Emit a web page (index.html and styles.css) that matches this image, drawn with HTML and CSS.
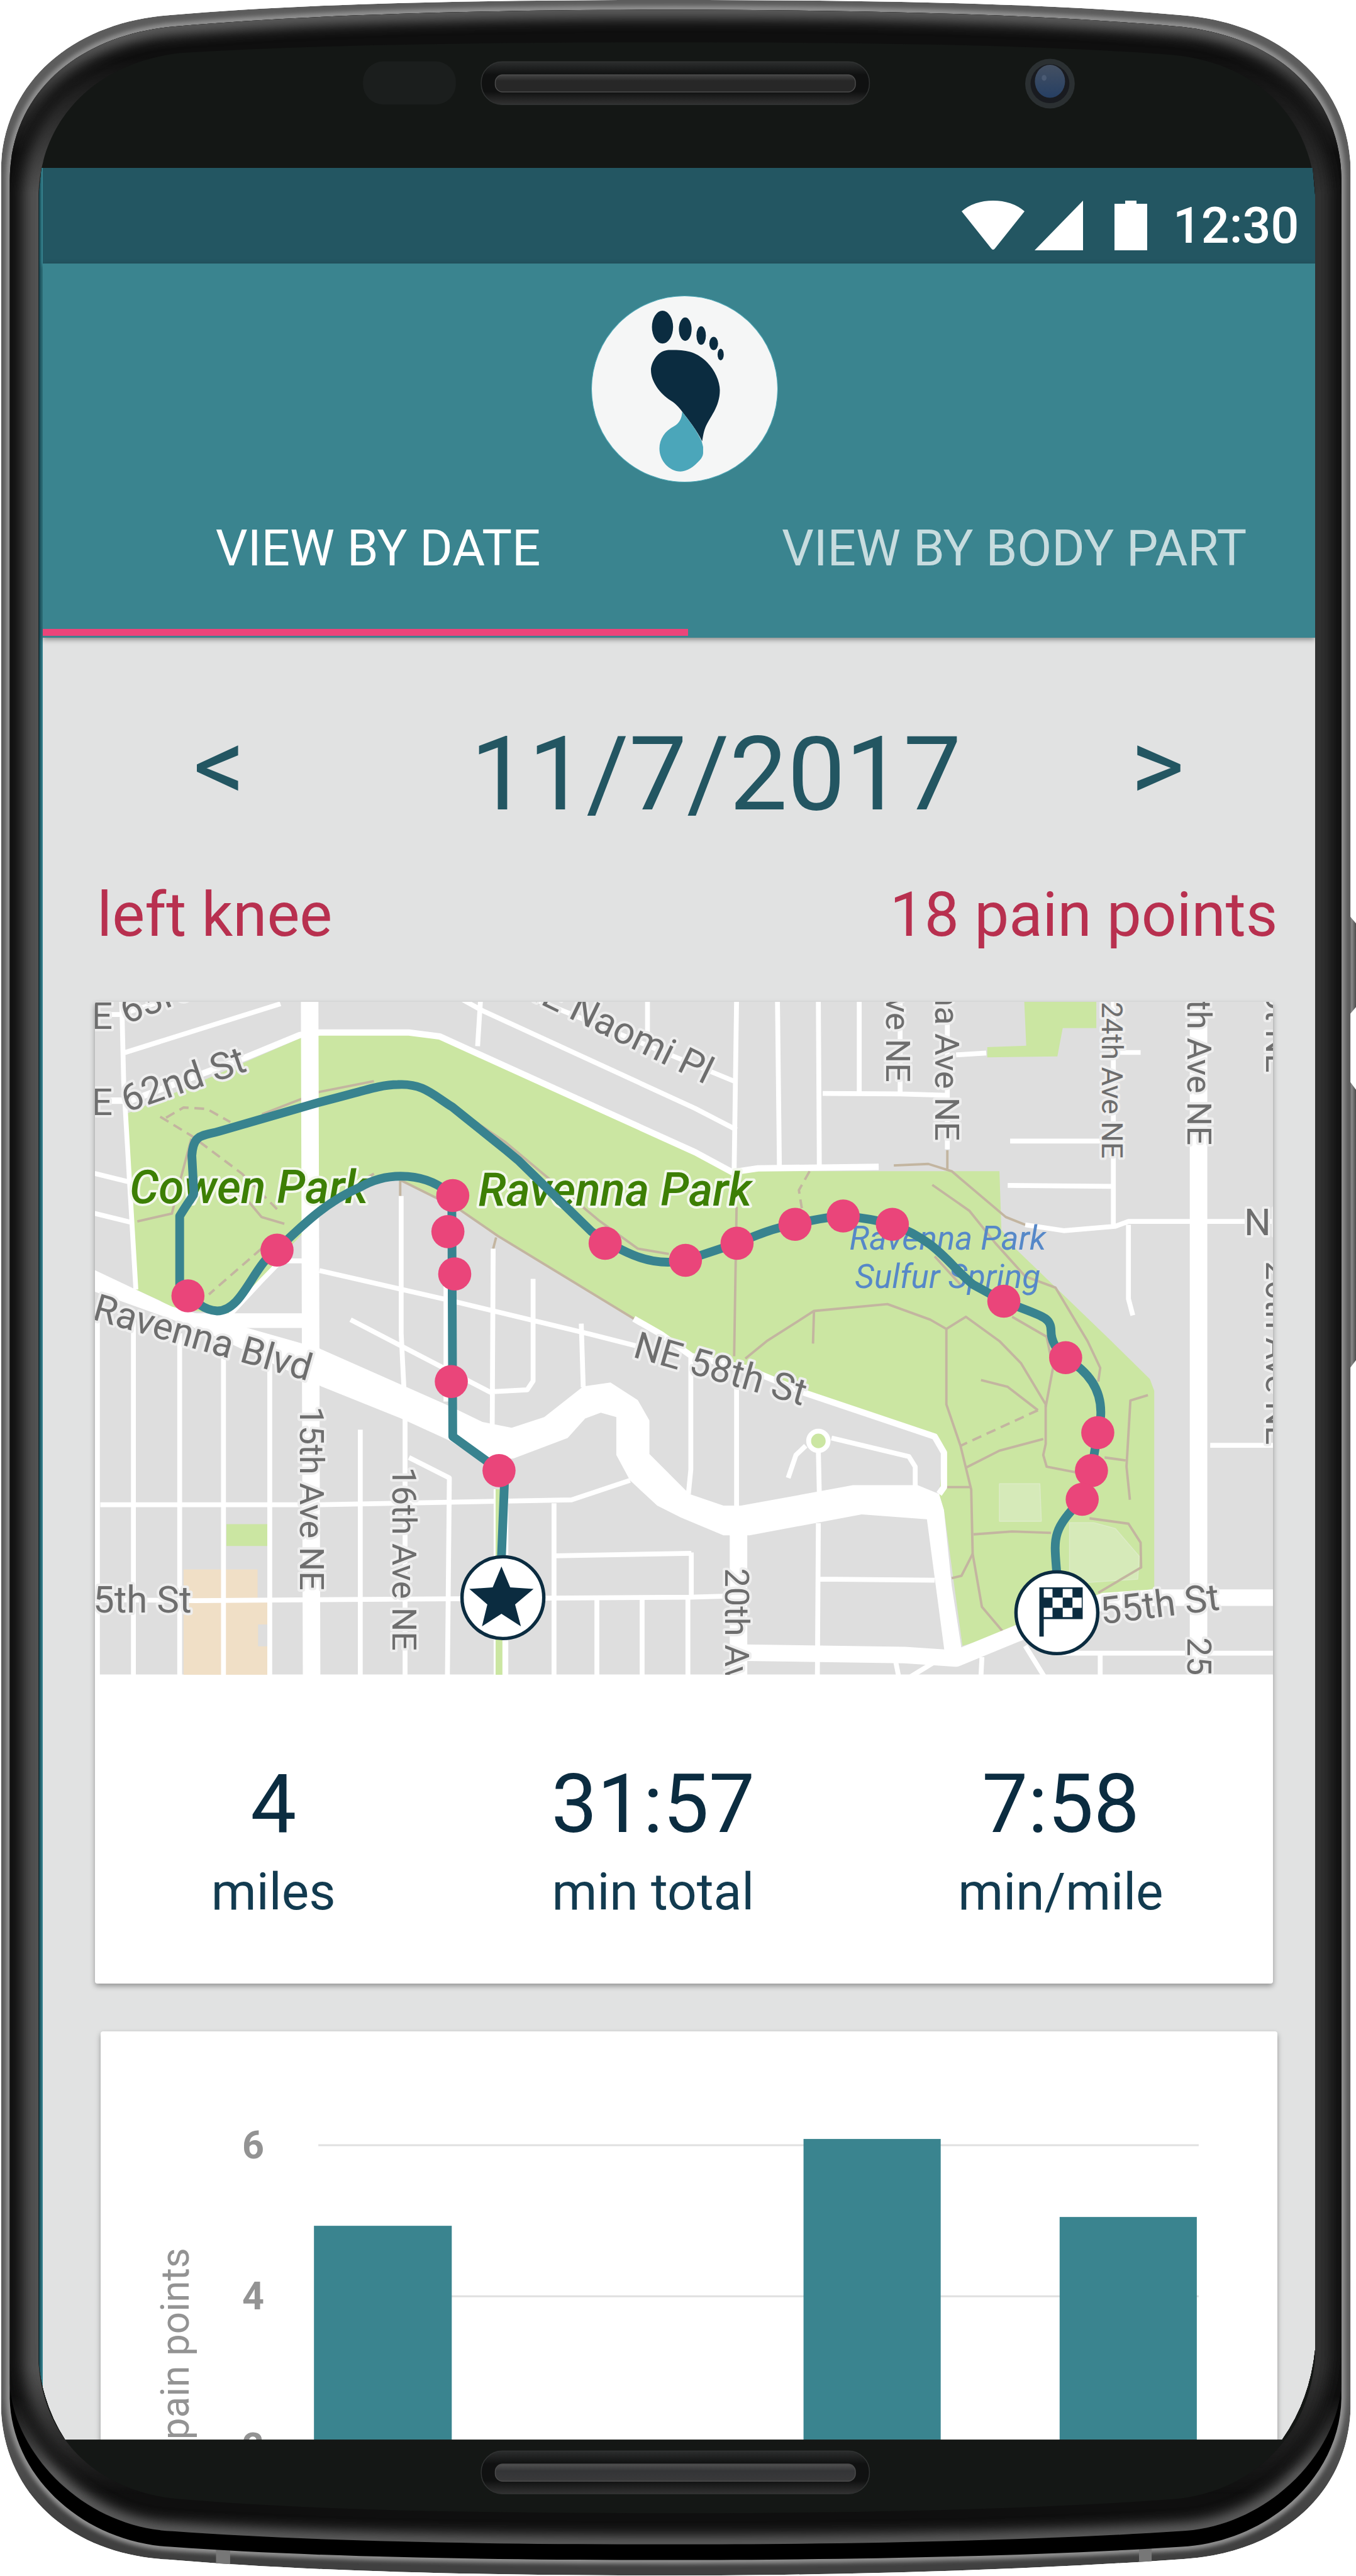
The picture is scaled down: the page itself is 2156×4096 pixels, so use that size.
FILE: index.html
```html
<!DOCTYPE html>
<html lang="en">
<head>
<meta charset="utf-8">
<title>Pain journal</title>
<link rel="stylesheet" href="styles.css">
</head>
<body>
<div class="phone">
  <div class="screen">
    <div class="status">
      <svg class="wifi" viewBox="0 0 100 79" aria-hidden="true"><path d="M0 17Q20 0 50 0T100 17L53 76Q50 80 47 76Z"/></svg>
      <svg class="signal" viewBox="0 0 77 79" aria-hidden="true"><path d="M0 79L77 0V79Z"/></svg>
      <svg class="battery" viewBox="0 0 52 79" aria-hidden="true"><path d="M0 5H17V0H35V5H52V79H0Z"/></svg>
      <span class="clock">12:30</span>
    </div>
    <header class="header">
      <div class="brand">
        <svg class="logo" viewBox="200 83 1150 1150" role="img" aria-label="Foot logo">
          <circle cx="775" cy="658" r="573" fill="#f5f6f6" stroke="#4aa6b5" stroke-width="4"/>
          <g fill="#0b2c40">
            <ellipse cx="639" cy="277" rx="65" ry="101"/>
            <ellipse cx="779" cy="290" rx="39" ry="72"/>
            <ellipse cx="877" cy="329" rx="29" ry="57"/>
            <ellipse cx="954" cy="378" rx="27" ry="41"/>
            <ellipse cx="997" cy="446" rx="19" ry="36"/>
            <path d="M690 418C790 416 850 430 915 495C960 540 992 610 992 665C992 770 930 830 902 897C890 930 888 955 883 980C850 910 800 850 760 797C740 770 715 745 690 730C620 685 568 610 568 543C568 500 600 445 640 427C655 420 670 418 690 418Z"/>
          </g>
          <path fill="#4ba6ba" d="M760 797C800 850 850 910 881 982L889 1015V1055Q887 1075 870 1095C830 1140 790 1166 750 1166C680 1166 620 1100 620 1025C620 965 655 915 710 887Q758 860 760 797Z"/>
        </svg>
      </div>
      <nav class="tabs">
        <button class="tab tab-active" type="button">VIEW BY DATE</button>
        <button class="tab" type="button">VIEW BY BODY PART</button>
      </nav>
    </header>
    <main class="main">
      <div class="date-nav">
        <button class="arrow" type="button" aria-label="Previous day">&lt;</button>
        <h1 class="date">11/7/2017</h1>
        <button class="arrow" type="button" aria-label="Next day">&gt;</button>
      </div>
      <div class="summary"><span>left knee</span><span>18 pain points</span></div>

      <section class="card run-card">
        <svg class="map" viewBox="0 0 1872 1069" role="img" aria-label="Map of the run">
          <rect width="1872" height="1069" fill="#dedede"/>
          <g transform="scale(.7736) translate(-197 -2059)" fill="none" stroke-linejoin="round">
            <!-- parks and buildings -->
            <g fill="#cbe6a2">
              <path d="M264 2288L281 2650L331 2673L359 2690L475 2701L539 2632L579 2582L658 2499L750 2426H826L945 2485L1025 2540L1304 2710L1360 2742L1423 2787L1533 2811L1657 2863L1922 2952L1941 2985L1931 3070L1941 3103L1979 3382L2090 3349L2258 3288L2373 3264V2858L2364 2834L2285 2756L2090 2568L2059 2527L2055 2407H1506L1430 2370L905 2130L842 2125H658L618 2134Z"/>
              <path d="M2106 2059H2254V2113H2185L2174 2171L2030 2173V2152L2110 2149Z"/>
              <path d="M467 3132H551V3177H467Z"/>
            </g>
            <path fill="#f0dfc6" d="M379 3225H531V3290H551V3338H532V3383H551V3445H379Z"/>
            <g fill="#d6eab9" stroke="#dcebc6" stroke-width="2">
              <path d="M2055 3049H2138L2141 3126H2055Z"/>
              <path d="M2199 3129H2249L2293 3141L2342 3198L2339 3245L2231 3252H2199Z"/>
            </g>
            <!-- footpaths -->
            <g stroke="#c3b5a0" stroke-width="5">
              <path d="M826 2426L945 2485L1025 2540L1304 2710M824 2426V2458M1021 2543L1015 2566"/>
              <path d="M284 2510L355 2494L371 2430L395 2340M540 2290L658 2244L770 2222M499 2453L539 2501L586 2515M750 2424L770 2412"/>
              <path d="M873 2233L1041 2348L1232 2508L1312 2566L1376 2577"/>
              <path d="M1838 2395L1909 2392L1957 2407L2068 2501L2108 2517M1948 2364V2405"/>
              <path d="M1917 2435L1993 2488L2046 2554L2108 2623L2170 2646L2236 2756L2262 2811L2258 2839"/>
              <path d="M1515 2480L1510 2787M1533 2792L1577 2756L1674 2694L1825 2680L1913 2712L1946 2731V2886L1975 2971L1997 3061L2000 3193L2019 3302L2063 3354"/>
              <path d="M1674 2694L1672 2761M1946 2731L1986 2706L2055 2756L2099 2801L2150 2886V2967L2145 2990L2152 3014L2214 3026"/>
              <path d="M1922 2582L1975 2640M2081 2706L2152 2747L2165 2811L2150 2891M2017 2836L2072 2850L2134 2898"/>
              <path d="M2145 2957L2055 2981L1986 3016M1946 3056H1995M2002 3153L2081 3147L2161 3150M2000 3193L1977 3238L1957 3243"/>
              <path d="M2360 2867L2324 2878L2316 3014L2323 3082M2271 2995L2314 3001M2240 3120L2320 3131L2345 3170L2346 3221L2258 3273"/>
              <path stroke-dasharray="20 12" d="M331 2295L395 2334L499 2412L571 2485M343 2297L379 2276L427 2279L475 2306M563 2545L431 2660M1665 2407L1643 2446L1649 2483M2134 2898L1975 2971"/>
            </g>
            <!-- side streets -->
            <g stroke="#fff" stroke-width="10">
              <path d="M190 2085H250L330 2059M256 2164L578 2063M252 2055L256 2224L281 2650M190 2410L272 2430M190 2492L276 2513"/>
              <path stroke-width="13" d="M190 2262H270L507 2173L618 2127L658 2122H842L905 2130L1430 2368L1506 2409L1559 2401L1807 2398"/>
              <path d="M953 2055L993 2077L1430 2278L1515 2322M1104 2055L1515 2224M989 2055L983 2150M1332 2055V2123"/>
              <path d="M1515 2055L1510 2407M1599 2055L1603 2400M1683 2055L1685 2400M1767 2055V2245M1851 2055V2245M1948 2055V2362M1692 2247L1851 2248L1948 2251M1966 2168L2028 2164"/>
              <path d="M2108 2517L2187 2529L2293 2520L2320 2510H2625M2289 2055V2518M2302 2163H2345M2077 2345H2289M2072 2436L2285 2438M2320 2517V2669L2329 2703M2488 2970H2625"/>
              <path d="M475 2701L539 2632L579 2591H638M658 2611L929 2673L1216 2742L1310 2766M826 2458V2740L834 2900V3445M1015 2566L1013 2940M1097 2628V2838L1085 2856L1013 2860M722 2712L1013 2863M918 2640V2880M1196 2720L1200 2851M1421 2790V3020L1416 3070M1515 2800V3095"/>
              <path stroke-width="13" d="M1304 2710L1360 2742L1423 2787L1533 2811L1657 2863L1922 2952L1941 2985V3056L1931 3070"/>
              <path d="M202 2700V3445M276 2710V3445M371 2740V3445M461 2770V3445M556 2800V3445M742 2938V3445M842 2995L925 3037L921 3445M1140 3089V3445M1228 3285V3445M1321 3285V3445M1415 3285V3445M1422 3190V3285"/>
              <path d="M208 3092H658L1176 3082L1296 3042M190 3287L403 3289L1420 3282L1519 3279M1140 3197L1422 3192M1687 3245L1922 3247M1683 2981L1685 3070M1683 3130L1681 3445M1710 2955L1869 2993L1882 3014V3060M1657 2971L1637 2990L1621 3037"/>
              <path d="M2170 3397H2625M2262 3400V3445M2108 3382L2147 3445M2019 3405L2017 3445M1842 3415L1848 3445M1922 3415L1873 3445"/>
              <circle cx="1683" cy="2961" r="20" fill="#cbe6a2"/>
            </g>
            <!-- avenues -->
            <g stroke="#fff">
              <path stroke-width="36" d="M638 2055L642 3445M2464 2055V3445M1519 3130V3445"/>
              <path stroke-width="30" d="M400 2714H638M1031 3060V3445"/>
              <path stroke-width="34" d="M1533 3396L1860 3401L1966 3408L2090 3357L2270 3290L2373 3283H2625"/>
              <path fill="#fff" stroke="none" d="M190 2607L281 2650L355 2685L658 2771L929 2891L993 2922L1053 2934L1120 2912L1200 2849L1256 2841L1312 2877L1336 2919V2988L1418 3070L1488 3094H1524L1754 3052H1887L1931 3070L1941 3103L1957 3259L1979 3400H1943L1906 3122L1772 3112L1542 3155H1488L1400 3118L1352 3094L1296 3042L1268 2990V2912L1236 2903L1204 2915L1168 2955L1057 2997L993 3004L929 2962L826 2915L662 2849L420 2735L190 2652Z"/>
              <path stroke="#cbe6a2" stroke-width="14" d="M1027 3060V3445"/>
            </g>
          </g>
          <!-- place names -->
          <g class="street">
            <text x="-6" y="43">E</text>
            <text x="50" y="36" transform="rotate(-22 50 36)">63rd St</text>
            <text x="-6" y="180">E</text>
            <text x="50" y="176" transform="rotate(-19 50 176)">62nd St</text>
            <text x="668" y="-16" transform="rotate(26 668 -16)">NE Naomi Pl</text>
            <text x="-6" y="504" transform="rotate(16 -6 504)">Ravenna Blvd</text>
            <text x="853" y="564" transform="rotate(16 853 564)">NE 58th St</text>
            <text x="-3" y="971">5th St</text>
            <text x="1600" y="989" transform="rotate(-7 1600 989)">55th St</text>
            <text x="1826" y="371">NE</text>
          </g>
          <g class="street street-vertical">
            <text transform="translate(326 643) rotate(90)">15th Ave NE</text>
            <text transform="translate(473 739) rotate(90)">16th Ave NE</text>
            <text transform="translate(1001 900) rotate(90)">20th Ave NE</text>
            <text transform="translate(1736 1010) rotate(90)">25th Ave NE</text>
            <text transform="translate(1861 412) rotate(90)">26th Ave NE</text>
            <g text-anchor="end">
              <text transform="translate(1257 128) rotate(90)">22nd Ave NE</text>
              <text transform="translate(1335 221) rotate(90)">Ravenna Ave NE</text>
              <text class="street-small" transform="translate(1600 249) rotate(90)">24th Ave NE</text>
              <text transform="translate(1736 228) rotate(90)">25th Ave NE</text>
              <text transform="translate(1861 113) rotate(90)">Ct NE</text>
            </g>
          </g>
          <g class="park">
            <text x="55" y="320">Cowen Park</text>
            <text x="609" y="324">Ravenna Park</text>
          </g>
          <g class="spring">
            <text x="1355" y="394">Ravenna Park</text>
            <text x="1355" y="455">Sulfur Spring</text>
          </g>
          <!-- run and pain points -->
          <g transform="scale(.7736) translate(-196 -2059)">
            <path fill="none" stroke="#38838f" stroke-width="18" stroke-linejoin="round" d="M1031 3200L1037 3051L1029 3023L931 2952L929 2457C880 2410 800 2405 740 2440C670 2470 620 2520 570 2568C520 2600 500 2694 447 2694C420 2692 405 2680 370 2640V2499C400 2450 399 2460 399 2448L395 2375C398 2330 415 2335 451 2325L658 2265C740 2245 780 2229 818 2229C870 2226 890 2250 930 2275L1041 2364L1065 2384L1216 2531C1280 2575 1340 2605 1409 2590L1515 2555C1560 2536 1590 2524 1634 2516Q1690 2502 1733 2499Q1790 2504 1834 2516C1930 2552 1950 2600 2000 2640L2063 2674C2140 2705 2160 2705 2160 2735Q2160 2765 2190 2791C2240 2820 2265 2860 2262 2910L2256 2944L2243 3022L2224 3081C2160 3145 2166 3160 2172 3235"/>
            <g fill="#ea457a">
              <circle cx="1026" cy="3022" r="34"/><circle cx="928" cy="2839" r="34"/><circle cx="935" cy="2618" r="34"/><circle cx="921" cy="2531" r="34"/><circle cx="931" cy="2457" r="34"/><circle cx="570" cy="2569" r="34"/><circle cx="387" cy="2663" r="34"/><circle cx="1244" cy="2555" r="34"/><circle cx="1409" cy="2590" r="34"/><circle cx="1515" cy="2555" r="34"/><circle cx="1634" cy="2516" r="34"/><circle cx="1733" cy="2499" r="34"/><circle cx="1834" cy="2516" r="34"/><circle cx="2063" cy="2674" r="34"/><circle cx="2190" cy="2790" r="34"/><circle cx="2256" cy="2944" r="34"/><circle cx="2243" cy="3022" r="34"/><circle cx="2224" cy="3081" r="34"/>
            </g>
            <g fill="#fff" stroke="#0b2c40" stroke-width="7">
              <circle cx="1034" cy="3283" r="84"/><circle cx="2172" cy="3314" r="84"/>
            </g>
            <path fill="#0b2c40" d="M1031 3219L1049 3262L1097 3265L1059 3297L1071 3342L1031 3316L991 3342L1002 3297L965 3265L1013 3262Z"/>
            <path fill="#0b2c40" d="M2136 3262H2225V3327H2145V3363H2136Z"/>
            <path fill="#fff" d="M2145 3265H2163V3283H2145ZM2184 3265H2204V3283H2184ZM2163 3283H2184V3304H2163ZM2204 3283H2223V3304H2204ZM2145 3304H2163V3323H2145ZM2184 3304H2204V3323H2184Z"/>
          </g>
        </svg>
        <dl class="stats">
          <div class="stat"><dd>4</dd><dt>miles</dt></div>
          <div class="stat"><dd>31:57</dd><dt>min total</dt></div>
          <div class="stat"><dd>7:58</dd><dt>min/mile</dt></div>
        </dl>
      </section>

      <section class="card chart-card">
        <svg class="chart" viewBox="0 0 1870 960" role="img" aria-label="Pain points chart">
          <path stroke="#e0e0e0" stroke-width="3" d="M346 181H1745M346 421H1745M346 661H1745"/>
          <g fill="#3a848f">
            <rect x="339" y="309" width="219" height="592"/>
            <rect x="1117" y="171" width="218" height="730"/>
            <rect x="1524" y="295" width="218" height="606"/>
          </g>
          <g class="tick"><text x="225" y="202">6</text><text x="225" y="442">4</text><text x="225" y="682">2</text></g>
          <text class="axis" transform="translate(140 649) rotate(-90)">pain points</text>
        </svg>
      </section>
    </main>
  </div>

  <svg class="shell" viewBox="0 0 2787 5295" preserveAspectRatio="none" aria-hidden="true">
    <defs>
      <linearGradient id="slot" x2="0" y2="1"><stop offset="0" stop-color="#2c2e2e"/><stop offset=".3" stop-color="#101111"/><stop offset=".7" stop-color="#101111"/><stop offset="1" stop-color="#323232"/></linearGradient>
      <linearGradient id="grille" x2="0" y2="1"><stop offset="0" stop-color="#444"/><stop offset=".35" stop-color="#272727"/><stop offset="1" stop-color="#272727"/></linearGradient>
      <linearGradient id="grille-low" x2="0" y2="1"><stop offset="0" stop-color="#505050"/><stop offset=".4" stop-color="#343537"/><stop offset="1" stop-color="#3a3a3b"/></linearGradient>
      <linearGradient id="rim" x2="0" y2="1"><stop offset="0" stop-color="#5c5c5c"/><stop offset=".93" stop-color="#5c5c5c"/><stop offset=".98" stop-color="#404040"/></linearGradient>
      <linearGradient id="lens" x2="0" y2="1"><stop offset="0" stop-color="#445062"/><stop offset="1" stop-color="#263f63"/></linearGradient>
      <linearGradient id="key"><stop offset="0" stop-color="#4c4c4c"/><stop offset=".5" stop-color="#868686"/><stop offset="1" stop-color="#4c4c4c"/></linearGradient>
      <linearGradient id="inner-light"><stop offset="0" stop-color="#525252"/><stop offset="1" stop-color="#303030"/></linearGradient>
      <linearGradient id="sides-fade" gradientUnits="userSpaceOnUse" x1="0" y1="0" x2="0" y2="5295"><stop offset=".022" stop-color="#000"/><stop offset=".075" stop-color="#fff"/><stop offset=".92" stop-color="#fff"/><stop offset=".968" stop-color="#000"/></linearGradient>
      <linearGradient id="ends-fade" gradientUnits="userSpaceOnUse" x1="0" y1="0" x2="0" y2="5295"><stop offset=".015" stop-color="#fff"/><stop offset=".06" stop-color="#000"/><stop offset=".93" stop-color="#000"/><stop offset=".96" stop-color="#fff"/></linearGradient>
      <mask id="sides" maskUnits="userSpaceOnUse" x="0" y="0" width="2787" height="5295"><rect width="2787" height="5295" fill="url(#sides-fade)"/></mask>
      <mask id="ends" maskUnits="userSpaceOnUse" x="0" y="0" width="2787" height="5295"><rect width="2787" height="5295" fill="url(#ends-fade)"/></mask>
      <filter id="soft" filterUnits="userSpaceOnUse" x="0" y="0" width="2787" height="5295"><feGaussianBlur stdDeviation="14"/></filter>
      <filter id="edge" filterUnits="userSpaceOnUse" x="0" y="0" width="2787" height="5295"><feGaussianBlur stdDeviation="4"/></filter>
      <path id="body-edge" d="M2 350C4 170 150 45 350 31C640 6 1000 0 1386 0C1780 0 2140 6 2426 31C2628 45 2774 170 2776 350V4950C2770 5130 2628 5248 2433 5260C2100 5284 1700 5294 1386 5294C1000 5294 640 5286 345 5261C150 5252 8 5130 2 4950Z"/>
      <path id="rim-edge" d="M20 370C22 180 175 68 364 54C640 30 1000 20 1386 20C1780 20 2140 30 2414 54C2603 68 2756 180 2757 370V4930C2754 5090 2608 5225 2428 5235C2100 5256 1700 5262 1386 5262C1000 5262 640 5256 350 5235C170 5225 24 5090 20 4930Z"/>
      <path id="glass-edge" d="M20 370C22 180 175 68 364 54C640 30 1000 20 1386 20C1780 20 2140 30 2414 54C2603 68 2756 180 2757 370V4898C2752 5040 2608 5195 2423 5203C2100 5224 1700 5230 1386 5230C1000 5230 640 5224 355 5203C170 5195 26 5040 20 4898Z"/>
      <path id="face-edge" d="M79 400C84 250 190 130 370 109C640 92 1000 87 1386 87C1780 87 2140 92 2412 113C2590 130 2697 250 2703 400V4845C2690 5020 2560 5125 2412 5137C2100 5160 1700 5166 1386 5166C1000 5166 640 5160 370 5137C220 5125 90 5030 79 4855Z"/>
      <clipPath id="opening"><path clip-rule="evenodd" d="M0 0H2787V5295H0ZM85 345L79 400V4855Q88 4945 134 5015H2635Q2692 4935 2703 4830V400L2698 345Z"/></clipPath>
      <clipPath id="glass"><use href="#glass-edge"/></clipPath>
      <clipPath id="body"><use href="#body-edge"/></clipPath>
    </defs>
    <g clip-path="url(#opening)">
      <path fill="url(#key)" d="M2770 1878L2787 1898V2070L2770 2090ZM2770 2217L2787 2240V2796L2770 2818Z"/>
      <g clip-path="url(#body)">
        <use href="#body-edge" fill="url(#rim)"/>
        <use href="#rim-edge" fill="none" stroke="#909090" stroke-width="16" filter="url(#edge)"/>
        <path fill="#777" d="M444 5230H473V5280H444ZM2341 5228H2367V5280H2341Z"/>
      </g>
      <use href="#rim-edge" fill="#000"/>
      <g clip-path="url(#glass)">
        <rect width="2787" height="5295" fill="#0f0f0f"/>
        <g mask="url(#ends)"><use href="#glass-edge" fill="none" stroke="#707070" stroke-width="30" filter="url(#soft)"/></g>
        <g mask="url(#sides)"><use href="#face-edge" fill="none" stroke="url(#inner-light)" stroke-width="64" filter="url(#soft)"/></g>
        <use href="#face-edge" fill="#141715"/>
      </g>
      <rect x="746" y="126" width="191" height="89" rx="42" fill="#1b1e1d"/>
      <rect x="989" y="127" width="798" height="88" rx="43" fill="url(#slot)" stroke="#303232" stroke-width="2"/>
      <rect x="1018" y="154" width="740" height="35" rx="15" fill="url(#grille)" stroke="#4a4a4a" stroke-width="2"/>
      <circle cx="2158" cy="172" r="51" fill="#2b3032"/>
      <circle cx="2158" cy="172" r="40" fill="#191b20"/>
      <ellipse cx="2158" cy="167" rx="31" ry="34" fill="url(#lens)"/>
      <ellipse cx="2146" cy="160" rx="5" ry="6" fill="#4b5b74"/>
      <rect x="989" y="5038" width="798" height="88" rx="43" fill="url(#slot)" stroke="#303232" stroke-width="2"/>
      <rect x="1018" y="5065" width="740" height="35" rx="15" fill="url(#grille-low)" stroke="#4a4a4a" stroke-width="2"/>
    </g>
  </svg>
</div>
</body>
</html>
```
FILE: styles.css
```css
* {
  box-sizing: border-box;
}

body {
  margin: 0;
  background: #fff;
  font-family: Roboto, "Liberation Sans", sans-serif;
}

button {
  margin: 0;
  border: 0;
  background: none;
  color: inherit;
  font: inherit;
}

.phone {
  position: relative;
  display: flex;
  width: 100%;
  aspect-ratio: 539 / 1024;
  padding: 12.4% 3% 10% 2.8%;
}

.shell {
  position: absolute;
  inset: 0;
  width: 100%;
  height: 100%;
  pointer-events: none;
}

.screen {
  flex: 1;
  min-width: 0;
  overflow: hidden;
  padding-left: 8px;
  background: linear-gradient(to right, #08181c 0, #1f5a66 4px, #3a8a96 8px, #e1e2e2 8px);
}

.status {
  display: flex;
  align-items: center;
  justify-content: flex-end;
  gap: 16px;
  height: 152px;
  padding: 31px 26px 0 0;
  background: #235662;
  color: #fff;
}

.status svg {
  height: 79px;
  fill: #fff;
}

.wifi {
  width: 100px;
}

.signal {
  width: 77px;
}

.battery {
  width: 52px;
  margin: 0 25px 0 34px;
}

.clock {
  font-size: 79px;
  font-weight: 500;
  line-height: 94px;
}

.header {
  position: relative;
  padding: 51px 0 3px;
  background: #3a848f;
  box-shadow: 0 3px 8px rgba(0, 0, 0, .4);
}

.brand {
  display: flex;
  justify-content: center;
  padding-left: 18px;
}

.logo {
  width: 297px;
  height: 297px;
}

.tabs {
  display: grid;
  grid-template-columns: 1025fr 997fr;
}

.tab {
  padding: 59px 0 82px 40px;
  border-bottom: 11px solid transparent;
  color: #c7dcdf;
  font-size: 80px;
  line-height: 92px;
  white-space: nowrap;
}

.tab-active {
  border-bottom-color: #ea457a;
  color: #fff;
}

.main {
  padding: 121px 60px 0 83px;
}

.date-nav {
  display: grid;
  grid-template-columns: auto 1fr auto;
  align-items: start;
  padding: 0 148px 0 156px;
  color: #235662;
  font-size: 164px;
}

.arrow {
  padding: 0;
  line-height: 164px;
}

.date {
  margin: 0;
  padding-left: 88px;
  font-size: 164px;
  font-weight: 400;
  line-height: 192px;
  text-align: center;
}

.summary {
  display: flex;
  justify-content: space-between;
  margin-top: 72px;
  padding-left: 3px;
  color: #b8304f;
  font-size: 98px;
  line-height: 112px;
}

.card {
  overflow: hidden;
  border-radius: 4px;
  background: #fff;
  box-shadow: 0 4px 8px rgba(0, 0, 0, .35);
}

.run-card {
  margin: 82px 7px 0 0;
}

.chart-card {
  margin: 76px 0 0 9px;
}

.map,
.chart {
  display: block;
  width: 100%;
}

.street {
  fill: #6e6e6e;
  stroke: #eee;
  stroke-width: 8px;
  stroke-linejoin: round;
  paint-order: stroke;
  font-size: 60px;
}

.street-vertical {
  font-size: 54px;
}

.street-small {
  font-size: 46px;
}

.park {
  fill: #3d7f05;
  stroke: #f3f8ec;
  stroke-width: 8px;
  stroke-linejoin: round;
  paint-order: stroke;
  font-size: 73px;
  font-style: italic;
  font-weight: 500;
}

.spring {
  fill: #5688c8;
  font-size: 53px;
  font-style: italic;
  text-anchor: middle;
}

.stats {
  display: grid;
  grid-template-columns: 566fr 640fr 655fr 10fr;
  margin: 0;
  padding: 130px 0 99px;
  color: #0b2c40;
  text-align: center;
}

.stat {
  display: flex;
  flex-direction: column;
  gap: 16px;
}

.stat dd {
  margin: 0;
  font-size: 130px;
  line-height: 152px;
}

.stat dt {
  color: #123b50;
  font-size: 82px;
  line-height: 94px;
}

.tick {
  fill: #939393;
  font-size: 61px;
  font-weight: 700;
}

.axis {
  fill: #939393;
  font-size: 62px;
  text-anchor: start;
}
```
